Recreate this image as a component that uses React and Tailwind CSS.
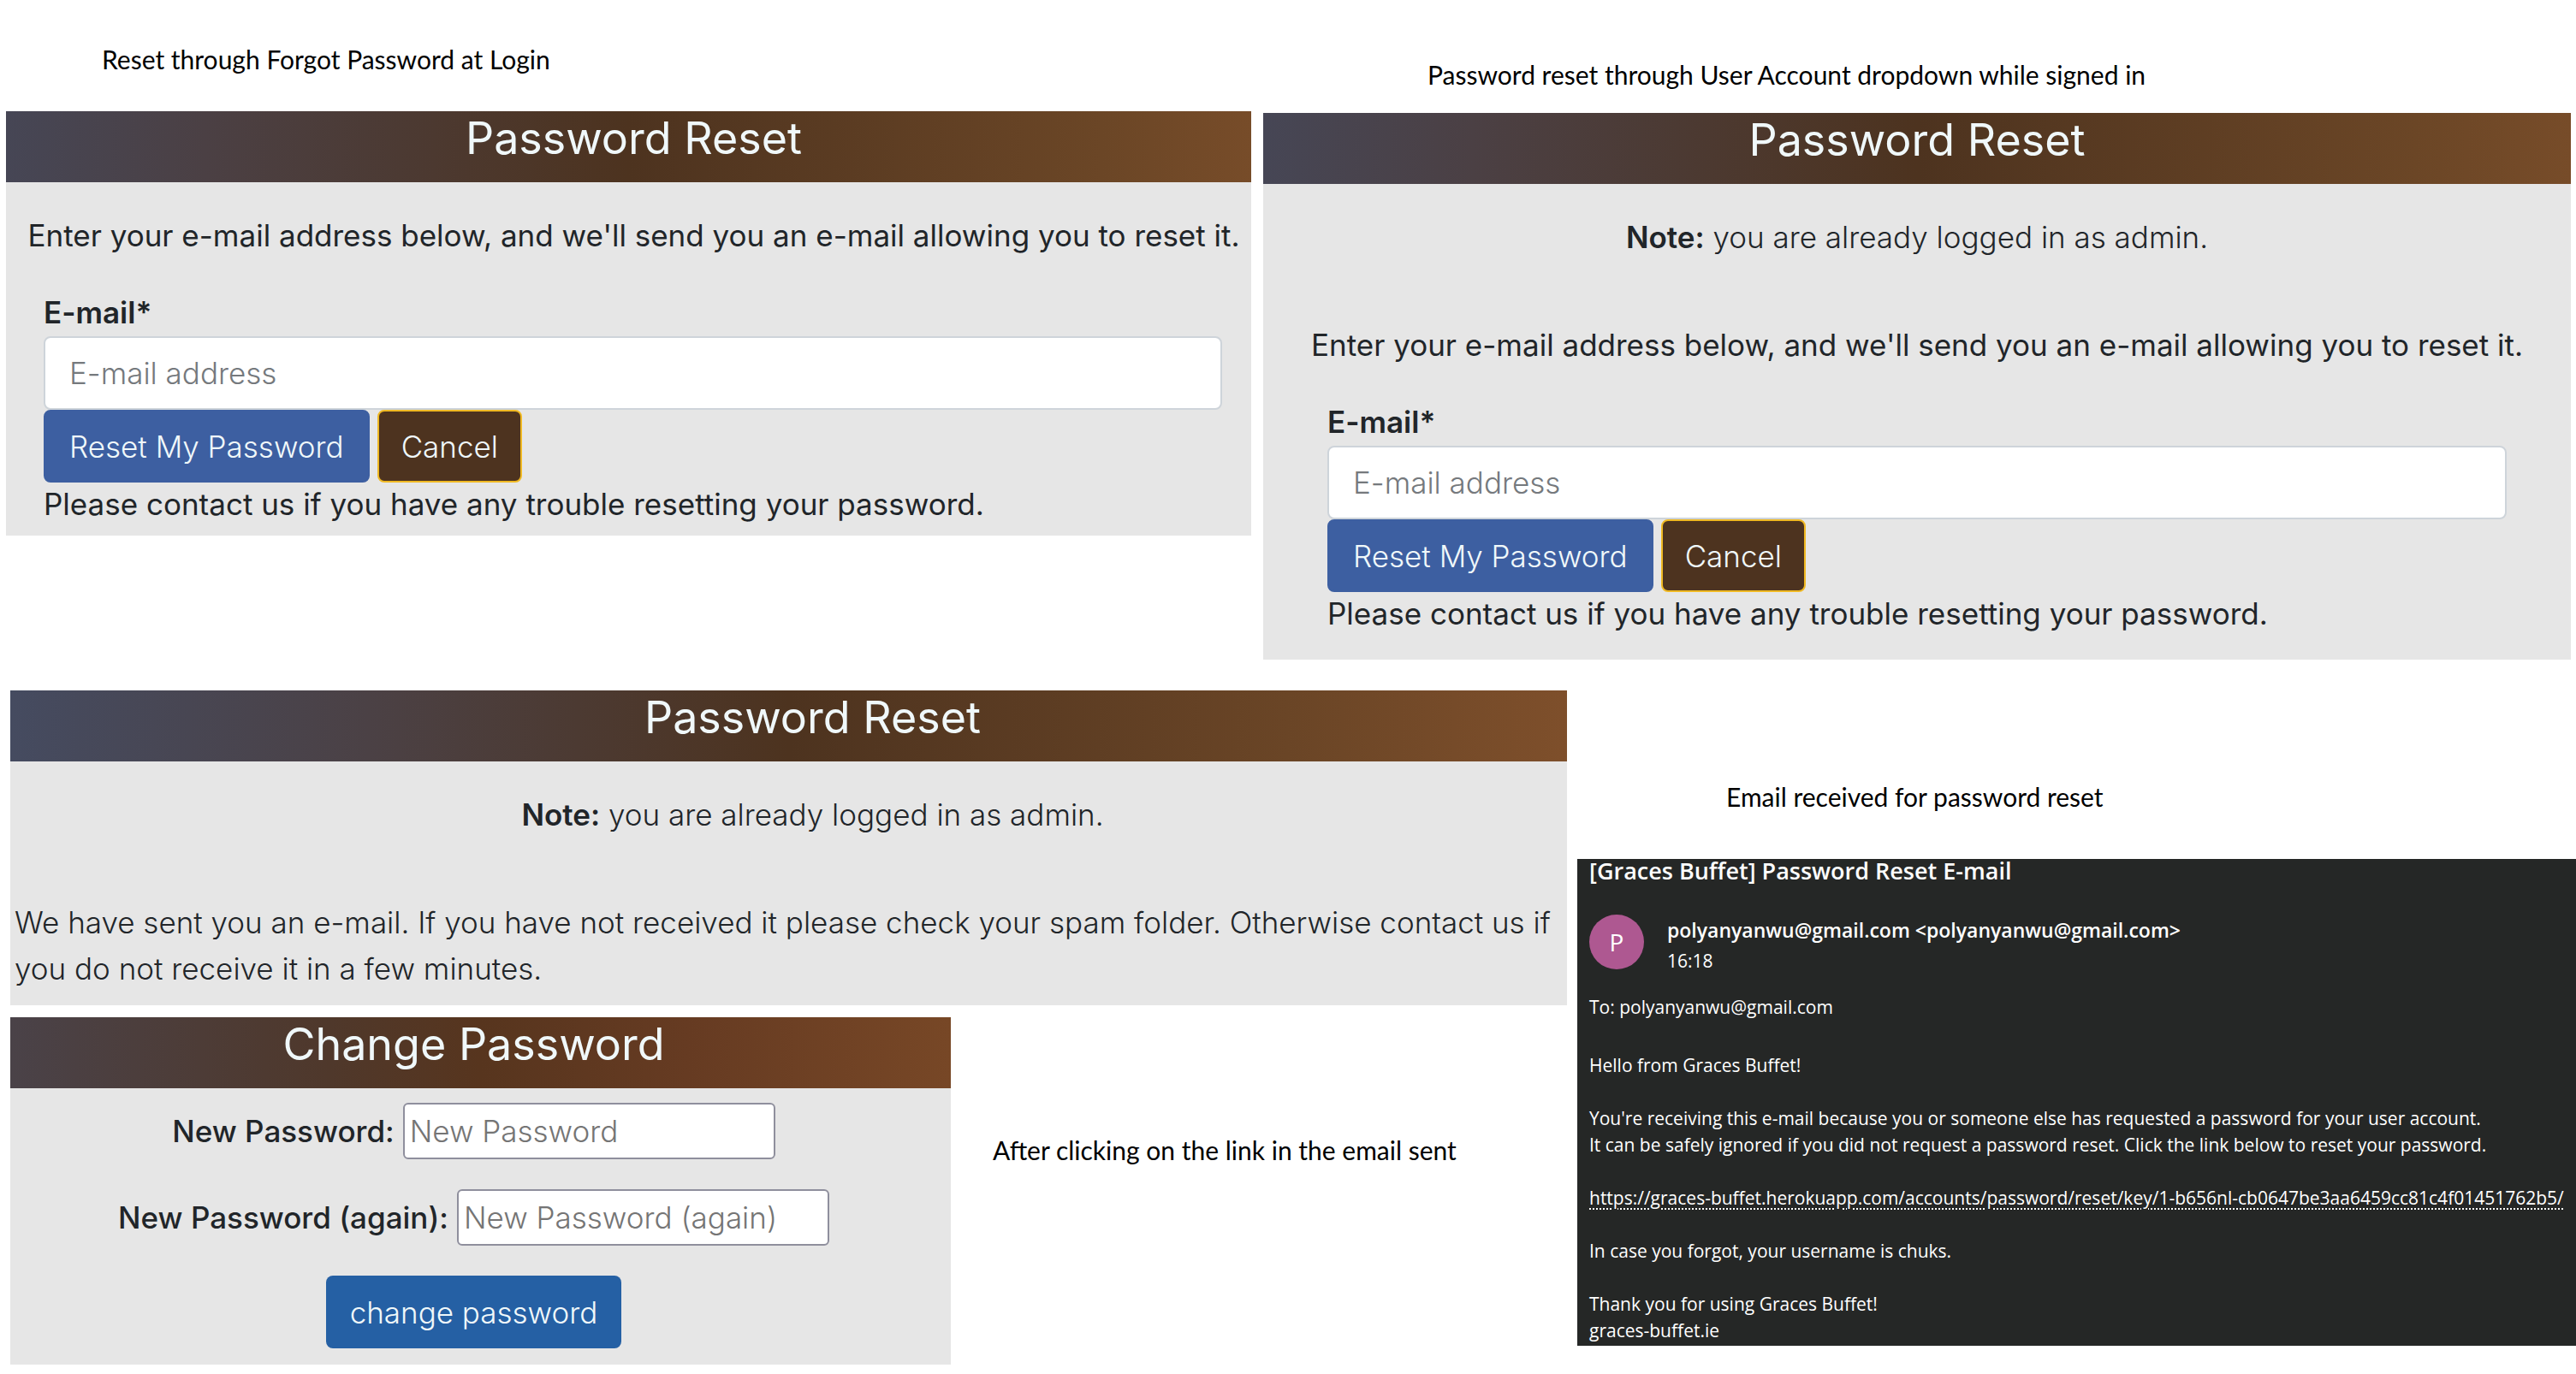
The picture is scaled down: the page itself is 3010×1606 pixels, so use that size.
import React from "react";

const headerGradients = {
  slate: "bg-[linear-gradient(90deg,#464655_0%,#4b4044_16%,#4d331f_50%,#6b4626_88%,#774c29_100%)]",
  blue: "bg-[linear-gradient(90deg,#454b60_0%,#4b4145_23%,#4d331f_50%,#6a4526_82%,#7e4f2b_100%)]",
  brown: "bg-[linear-gradient(90deg,#4a4248_0%,#4f382b_34%,#57351e_50%,#663b22_72%,#774726_100%)]",
};

function Caption({ className, children }) {
  return (
    <p className={`font-['Lato',sans-serif] text-[30px] leading-9 text-black ${className}`}>
      {children}
    </p>
  );
}

function Panel({ title, tone, titleClass = "", className = "", children }) {
  return (
    <section
      className={`bg-[#e6e6e6] font-['Inter',sans-serif] text-[35px] leading-[54px] font-light text-[#212529] ${className}`}
    >
      <header className={`pb-[19px] text-center ${headerGradients[tone]} ${titleClass}`}>
        <h2 className="text-[52px] leading-[64px] font-normal text-[#f0f8fa]">{title}</h2>
      </header>
      {children}
    </section>
  );
}

function LoggedInNote() {
  return (
    <p className="mb-[72px] text-center">
      <strong className="font-semibold">Note:</strong> you are already logged in as admin.
    </p>
  );
}

function Instructions() {
  return (
    <p className="mb-9 text-center font-normal whitespace-nowrap">
      Enter your e-mail address below, and we'll send you an e-mail allowing you to reset it.
    </p>
  );
}

function ResetForm({ id, className }) {
  return (
    <form className={className} onSubmit={(e) => e.preventDefault()}>
      <label htmlFor={id} className="mb-px block font-semibold">
        E-mail*
      </label>
      <input
        id={id}
        type="email"
        placeholder="E-mail address"
        className="block h-[86px] w-full rounded-lg border-2 border-[#ced4da] bg-white px-7 placeholder:text-[#75797d]"
      />
      <div className="flex gap-[9px]">
        <button
          type="submit"
          className="h-[85px] rounded-lg border-2 border-[#3d5fa1] bg-[#3d5fa1] px-7 text-[#f0f8fa]"
        >
          Reset My Password
        </button>
        <button
          type="button"
          className="h-[85px] rounded-lg border-2 border-[#f0b923] bg-[#4d331f] px-[26px] text-[#f0f8fa]"
        >
          Cancel
        </button>
      </div>
      <p className="leading-[50px] font-normal">
        Please contact us if you have any trouble resetting your password.
      </p>
    </form>
  );
}

function PasswordRow({ id, label }) {
  return (
    <div className="flex items-center gap-[10px]">
      <label htmlFor={id} className="font-medium">
        {label}:
      </label>
      <input
        id={id}
        type="password"
        placeholder={label}
        className="h-[66px] w-[435px] rounded-md border-2 border-[#8f8f9d] bg-white px-[6px] placeholder:text-[#757575]"
      />
    </div>
  );
}

function EmailMessage() {
  return (
    <article className="bg-[#252726] pb-[2px] pl-[14px] font-['Open_Sans',sans-serif] text-[21px] leading-[31px] text-white">
      <h2 className="text-[27px] leading-[27px] font-semibold">
        [Graces Buffet] Password Reset E-mail
      </h2>
      <div className="mt-[38px] flex gap-[27px]">
        <div className="flex size-16 items-center justify-center rounded-full bg-[#ae5891] text-[28px]">
          P
        </div>
        <div className="leading-9">
          <p className="text-[23px] font-semibold">
            polyanyanwu@gmail.com &lt;polyanyanwu@gmail.com&gt;
          </p>
          <p>16:18</p>
        </div>
      </div>
      <p className="mt-[21px]">To: polyanyanwu@gmail.com</p>
      <p className="mt-[37px]">Hello from Graces Buffet!</p>
      <p className="mt-[31px] whitespace-nowrap">
        You're receiving this e-mail because you or someone else has requested a password for your
        user account.
        <br />
        It can be safely ignored if you did not request a password reset. Click the link below to
        reset your password.
      </p>
      <p className="mt-[31px] whitespace-nowrap">
        <a href="#reset" className="underline decoration-dotted decoration-2 underline-offset-4">
          https://graces-buffet.herokuapp.com/accounts/password/reset/key/1-b656nl-cb0647be3aa6459cc81c4f01451762b5/
        </a>
      </p>
      <p className="mt-[31px]">In case you forgot, your username is chuks.</p>
      <p className="mt-[31px]">
        Thank you for using Graces Buffet!
        <br />
        graces-buffet.ie
      </p>
    </article>
  );
}

export default function App() {
  return (
    <main className="bg-white">
      <div className="grid grid-cols-[1455fr_1528fr] items-start gap-[14px] pr-[6px] pl-[7px]">
        <div>
          <Caption className="pt-[51px] pb-[43px] pl-28">Reset through Forgot Password at Login</Caption>
          <Panel title="Password Reset" tone="slate" titleClass="pl-3" className="pb-3">
            <div className="pt-[35px] pl-3">
              <Instructions />
              <ResetForm id="email-login" className="pr-[34px] pl-8" />
            </div>
          </Panel>
        </div>
        <div>
          <Caption className="pt-[69px] pb-[27px] pl-48">
            Password reset through User Account dropdown while signed in
          </Caption>
          <Panel title="Password Reset" tone="slate" className="pb-[29px]">
            <div className="pt-[35px]">
              <LoggedInNote />
              <Instructions />
              <ResetForm id="email-account" className="px-[75px]" />
            </div>
          </Panel>
        </div>
      </div>

      <div className="mt-9 grid grid-cols-[1819fr_1167fr] items-start gap-3 pl-3">
        <div className="min-w-0">
          <Panel title="Password Reset" tone="blue" titleClass="pl-14" className="pb-4">
            <div className="pt-[35px]">
              <div className="pl-14">
                <LoggedInNote />
              </div>
              <p className="pl-[5px] whitespace-nowrap">
                We have sent you an e-mail. If you have not received it please check your spam
                folder. Otherwise contact us if
                <br />
                you do not receive it in a few minutes.
              </p>
            </div>
          </Panel>
          <div className="mt-[14px] grid grid-cols-[1099fr_720fr] items-start">
            <Panel title="Change Password" tone="brown" titleClass="pr-4">
              <form
                className="flex flex-col items-center gap-[35px] pt-[17px] pr-4 pb-[19px]"
                onSubmit={(e) => e.preventDefault()}
              >
                <PasswordRow id="password1" label="New Password" />
                <PasswordRow id="password2" label="New Password (again)" />
                <button
                  type="submit"
                  className="h-[85px] rounded-lg bg-[#2560a4] px-7 text-[#f0f8fa]"
                >
                  change password
                </button>
              </form>
            </Panel>
            <Caption className="pt-[137px] pl-[49px]">
              After clicking on the link in the email sent
            </Caption>
          </div>
        </div>
        <div className="min-w-0">
          <Caption className="pt-[106px] pb-[55px] pl-[174px]">Email received for password reset</Caption>
          <EmailMessage />
        </div>
      </div>
    </main>
  );
}
